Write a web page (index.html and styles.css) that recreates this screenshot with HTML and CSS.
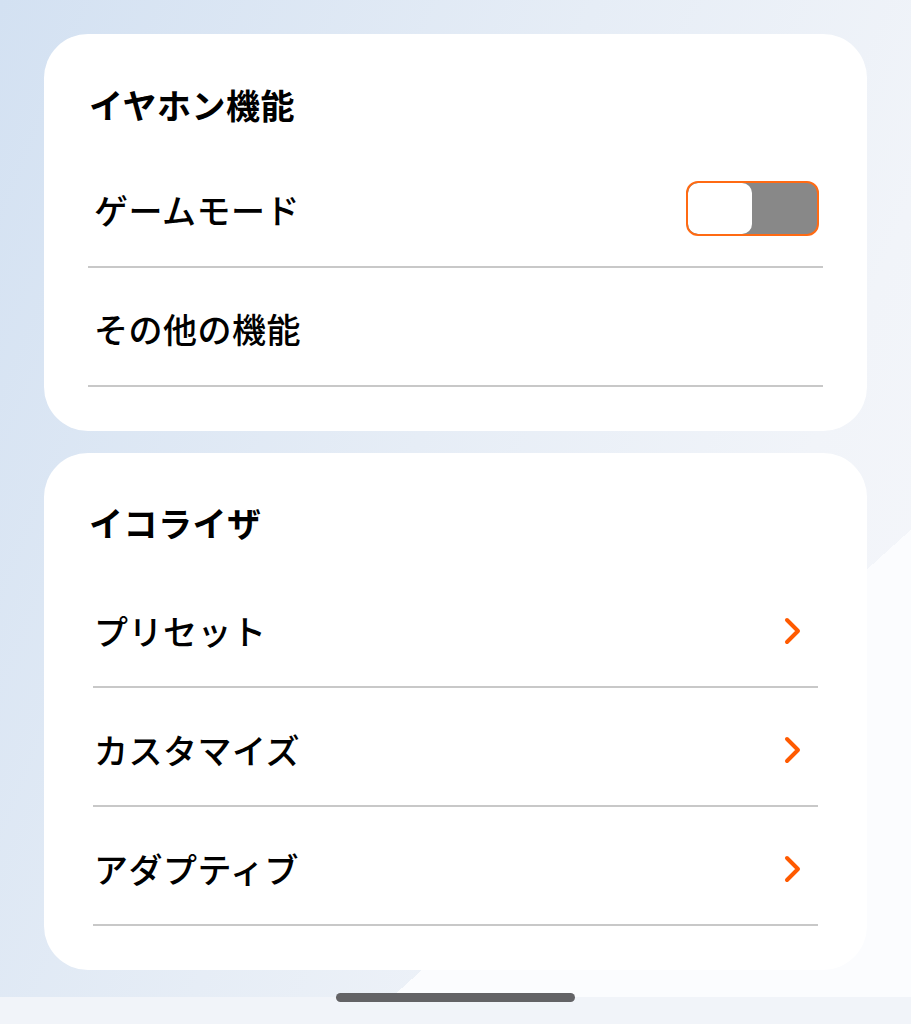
FILE: index.html
```html
<!DOCTYPE html>
<html lang="ja">
<head>
    <meta charset="UTF-8">
    <meta name="viewport" content="width=device-width, initial-scale=1.0">
    <title>イヤホン設定</title>
    <link rel="stylesheet" href="styles.css">
</head>
<body>
    <div class="page">
        <div class="card">
            <div class="card-title">イヤホン機能</div>
            <div class="row">
                <span class="label">ゲームモード</span>
                <div class="toggle">
                    <div class="knob"></div>
                </div>
            </div>
            <div class="row">
                <span class="label">その他の機能</span>
            </div>
        </div>

        <div class="card card-eq">
            <div class="card-title">イコライザ</div>
            <div class="row">
                <span class="label">プリセット</span>
                <svg class="chevron" width="18" height="28" viewBox="0 0 18 28"><polyline points="3,3 14,14 3,25" /></svg>
            </div>
            <div class="row">
                <span class="label">カスタマイズ</span>
                <svg class="chevron" width="18" height="28" viewBox="0 0 18 28"><polyline points="3,3 14,14 3,25" /></svg>
            </div>
            <div class="row">
                <span class="label">アダプティブ</span>
                <svg class="chevron" width="18" height="28" viewBox="0 0 18 28"><polyline points="3,3 14,14 3,25" /></svg>
            </div>
        </div>

        <div class="home-bar"></div>
    </div>
</body>
</html>
```

FILE: styles.css
```css
html, body {
    margin: 0;
    height: 100%;
}
body {
    font-family: "Noto Sans CJK JP", "Noto Sans", sans-serif;
    color: #000;
    background:
        linear-gradient(to bottom, transparent 997px, #f1f4f9 997px),
        linear-gradient(138deg, transparent 73.2%, #fbfcfe 73.2%),
        linear-gradient(112deg, #d3e1f2 0%, #e6edf6 45%, #f1f4f9 75%, #f6f7fb 100%);
}
.page {
    padding: 34px 44px 0;
    display: flex;
    flex-direction: column;
    gap: 22px;
}
.card {
    background: #fff;
    border-radius: 44px;
    padding: 0 44px 44px;
}
.card-title {
    font-size: 34px;
    font-weight: bold;
    line-height: 40px;
    padding: 51px 0 24px 1px;
    letter-spacing: 0.5px;
}
.card-eq .card-title {
    padding: 50px 0 26px 1px;
}
.row {
    height: 119px;
    box-sizing: border-box;
    border-bottom: 2px solid #c8c8c8;
    display: flex;
    align-items: center;
    justify-content: space-between;
    padding: 4px 4px 0 6px;
}
.card-eq .row {
    margin: 0 5px;
    padding: 6px 16px 0 1px;
}
.label {
    font-size: 34px;
    font-weight: 500;
    line-height: 40px;
    letter-spacing: 0.5px;
}
.toggle {
    width: 133px;
    height: 55px;
    box-sizing: border-box;
    border: 2px solid #ff6a13;
    border-radius: 12px;
    background: #888;
    overflow: hidden;
    margin-top: -3px;
}
.knob {
    width: 64px;
    height: 100%;
    background: #fff;
    border-radius: 10px;
}
.chevron {
    fill: none;
    stroke: #ff5a00;
    stroke-width: 4;
    stroke-linecap: round;
    stroke-linejoin: round;
}
.home-bar {
    align-self: center;
    width: 239px;
    height: 9px;
    border-radius: 5px;
    background: #636366;
    margin-top: 1px;
}
```
